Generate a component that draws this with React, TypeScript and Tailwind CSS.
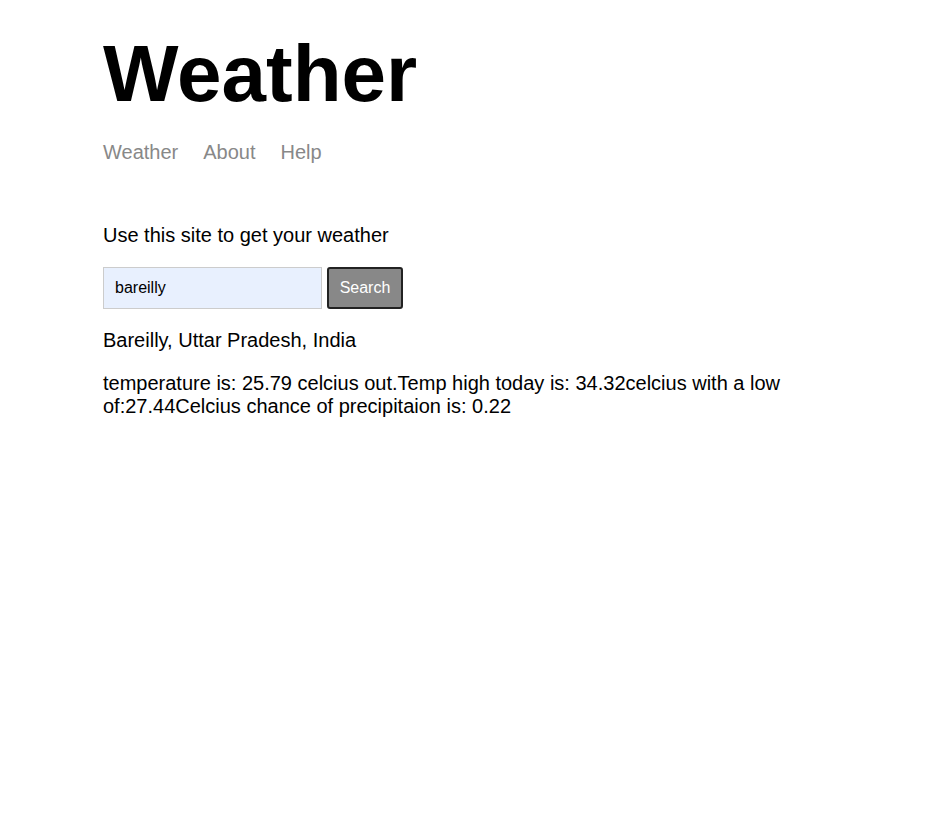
import * as React from "react";

export default function App() {
  const [city, setCity] = React.useState("bareilly");

  return (
    <div className="min-h-[831px] bg-white font-['Liberation_Sans',Arial,sans-serif] text-black">
      <div className="mx-auto max-w-[728px] pt-[28px]">
        <header>
          <h1 className="text-[80px] font-bold leading-[92px]">Weather</h1>
          <nav className="mt-[21px] flex gap-[25px] text-[20px] leading-[23px] text-[#888888]">
            <a href="#">Weather</a>
            <a href="#">About</a>
            <a href="#">Help</a>
          </nav>
        </header>

        <main className="mt-[60px]">
          <p className="text-[20px] leading-[23px]">Use this site to get your weather</p>
          <form className="mt-[20px] flex gap-[5px]" onSubmit={(e) => e.preventDefault()}>
            <input
              value={city}
              onChange={(e) => setCity(e.target.value)}
              className="h-[42px] w-[219px] border border-[#cccccc] bg-[#e8f0fe] px-[11px] text-[16px] text-black outline-none"
            />
            <button className="h-[42px] w-[76px] rounded-[3px] border-2 border-[#222222] bg-[#888888] text-[16px] text-white">
              Search
            </button>
          </form>
          <p className="mt-[20px] text-[20px] leading-[23px]">Bareilly, Uttar Pradesh, India</p>
          <p className="mt-[20px] text-[20px] leading-[23px]">
            temperature is: 25.79 celcius out.Temp high today is: 34.32celcius with a low of:27.44Celcius chance of precipitaion is: 0.22
          </p>
        </main>
      </div>
    </div>
  );
}
